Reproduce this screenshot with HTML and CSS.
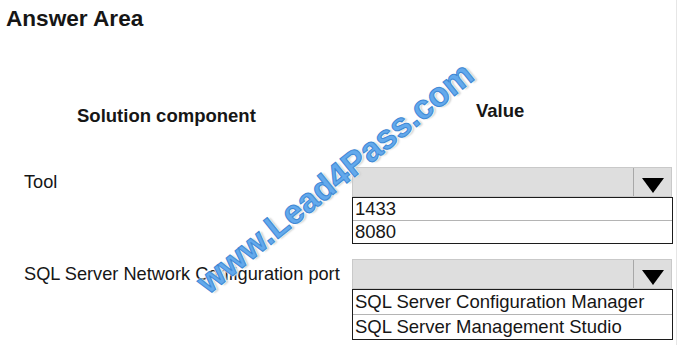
FILE: index.html
```html
<!DOCTYPE html>
<html lang="en">
<head>
  <meta charset="UTF-8">
  <meta name="viewport" content="width=device-width, initial-scale=1">
  <title>Answer Area</title>
  <link rel="stylesheet" href="styles.css">
</head>
<body>
  <div class="page">
    <h1 class="title">Answer Area</h1>

    <div class="heads">
      <div class="head head-comp">Solution component</div>
      <div class="head head-value">Value</div>
    </div>

    <div class="row">
      <div class="label">Tool</div>
      <div class="choice">
        <div class="select">
          <span class="select-field"></span>
          <span class="select-btn">
            <svg width="22" height="15" viewBox="0 0 22 15"><polygon points="0,0 22,0 11,15" fill="#000"/></svg>
          </span>
        </div>
        <ul class="options">
          <li>1433</li>
          <li>8080</li>
        </ul>
      </div>
    </div>

    <div class="row row-second">
      <div class="label">SQL Server Network Configuration port</div>
      <div class="choice">
        <div class="select">
          <span class="select-field"></span>
          <span class="select-btn">
            <svg width="22" height="15" viewBox="0 0 22 15"><polygon points="0,0 22,0 11,15" fill="#000"/></svg>
          </span>
        </div>
        <ul class="options options-tall">
          <li>SQL Server Configuration Manager</li>
          <li>SQL Server Management Studio</li>
        </ul>
      </div>
    </div>

    <div class="watermark">www.Lead4Pass.com</div>
  </div>
</body>
</html>
```

FILE: styles.css
```css
body {
  margin: 0;
  background: #fff;
  font-family: "Liberation Sans", Arial, sans-serif;
  color: #161616;
}
.page {
  position: relative;
  width: 676px;
  height: 345px;
  border-right: 1px solid #e6e6e6;
  overflow: hidden;
}
.title {
  margin: 0;
  padding: 6px 0 0 6px;
  font-size: 22.6px;
  line-height: 26px;
  font-weight: bold;
}
.heads {
  display: grid;
  grid-template-columns: 329px 321px;
  padding-left: 23px;
  margin-top: 68px;
  align-items: start;
}
.head {
  font-size: 18.5px;
  line-height: 22px;
  font-weight: bold;
}
.head-comp {
  padding: 5px 0 0 54px;
}
.head-value {
  padding-left: 124px;
}
.row {
  display: grid;
  grid-template-columns: 329px 321px;
  padding-left: 23px;
  margin-top: 40px;
  align-items: start;
}
.row-second {
  margin-top: 15px;
}
.label {
  font-size: 18.2px;
  line-height: 30px;
  padding-left: 1px;
}
.select {
  display: flex;
  box-sizing: border-box;
  width: 320px;
  height: 30px;
  border: 1px solid #c9c9c9;
  background: #dedede;
}
.select-field {
  flex: 1;
}
.select-btn {
  width: 38px;
  border-left: 1px solid #a8a8a8;
  display: flex;
  justify-content: center;
  padding-top: 10px;
  box-sizing: border-box;
}
.options {
  list-style: none;
  margin: 0;
  padding: 0;
  border: 1px solid #1c1c1c;
  background: #fff;
}
.options li {
  font-size: 18.5px;
  line-height: 22px;
  padding-left: 2px;
}
.options li + li {
  border-top: 1px solid #b4b4b4;
}
.options-tall li {
  line-height: 24px;
}
.watermark {
  position: absolute;
  left: 335px;
  top: 178px;
  transform: translate(-50%, -50%) rotate(-39deg);
  white-space: nowrap;
  font-size: 34px;
  font-weight: bold;
  color: #63a9ec;
  -webkit-text-stroke: 1px #3e88d4;
  text-shadow: 0 0 2px #fff, 1px 1px 1px #fff, -1px -1px 1px #fff, 2px 2px 2px #c9c9c9;
}
```
